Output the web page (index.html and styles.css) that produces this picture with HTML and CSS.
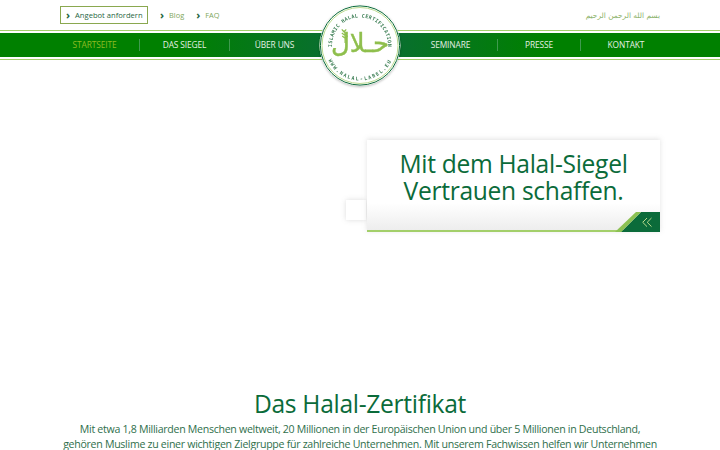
FILE: index.html
```html
<!DOCTYPE html>
<html lang="de">
<head>
  <title>Halal-Siegel</title>
  <meta name="viewport" content="width=device-width, initial-scale=1">
  <link rel="stylesheet" href="styles.css">
</head>
<body>
  <header class="header">
    <div class="topbar">
      <div class="toplinks">
        <a class="offer"><span class="chev">&#8250;</span>Angebot anfordern</a>
        <a class="toplink"><span class="chev">&#8250;</span>Blog</a>
        <a class="toplink"><span class="chev">&#8250;</span>FAQ</a>
      </div>
      <div class="basmala" dir="rtl" lang="ar">بسم الله الرحمن الرحيم</div>
    </div>

    <nav class="navband">
      <div class="navgrid">
        <a class="navitem active">STARTSEITE</a>
        <a class="navitem">DAS SIEGEL</a>
        <a class="navitem">ÜBER UNS</a>
        <span class="navgap"></span>
        <a class="navitem">SEMINARE</a>
        <a class="navitem">PRESSE</a>
        <a class="navitem last">KONTAKT</a>
      </div>
    </nav>

    <svg class="logo" width="84" height="84" viewBox="0 0 84 84">
      <defs>
        <path id="arcTop" d="M15.7 52 A28 28 0 1 1 68.3 52"/>
        <path id="arcBottom" d="M7 42.5 A35 35 0 0 0 77 42.5"/>
      </defs>
      <circle cx="42" cy="42.5" r="40.5" fill="#fff"/>
      <circle cx="42" cy="42.5" r="39.6" fill="none" stroke="#0b6b3a" stroke-width="1"/>
      <circle cx="42" cy="42.5" r="38" fill="none" stroke="#a9d072" stroke-width="0.8"/>
      <text class="logoring"><textPath href="#arcTop" startOffset="50%" text-anchor="middle">ISLAMIC HALAL CERTIFICATION</textPath></text>
      <text class="logoring wide"><textPath href="#arcBottom" startOffset="50%" text-anchor="middle">WWW.HALAL-LABEL.EU</textPath></text>
      <text class="logoword" x="42" y="49" lang="ar" text-anchor="middle">حـلال</text>
      <path d="M27 40 C27 36 27 32 26 27" fill="none" stroke="#8fbf4d" stroke-width="1"/>
      <path d="M26 29 l-2.2 -2.6 M26.4 32 l-2.6 -2 M26.8 35 l-2.6 -2 M26.2 29 l2 -2.6 M26.8 32 l2.4 -2.2 M27.2 35 l2.4 -2.2" fill="none" stroke="#8fbf4d" stroke-width="1.2"/>
    </svg>
  </header>

  <section class="hero">
    <button class="heroprev" aria-label="Zurück"></button>
    <div class="herocard">
      <h2 class="herotitle">Mit dem Halal-Siegel<br>Vertrauen schaffen.</h2>
      <div class="herofoot">
        <svg class="herocorner" width="48" height="20" viewBox="0 0 48 20">
          <polygon points="9,20 29,0 48,0 48,20" fill="#0b6b3a"/>
          <polygon points="3,20 24,0 29,0 9,20" fill="#8cc152"/>
          <path d="M35 6 L30.7 10.3 L35 14.6 M39.5 6 L35.2 10.3 L39.5 14.6" fill="none" stroke="#b9dc8c" stroke-width="1"/>
        </svg>
      </div>
    </div>
  </section>

  <section class="intro">
    <h1 class="introtitle">Das Halal-Zertifikat</h1>
    <p class="introtext">Mit etwa 1,8 Milliarden Menschen weltweit, 20 Millionen in der Europäischen Union und über 5 Millionen in Deutschland, gehören Muslime zu einer wichtigen Zielgruppe für zahlreiche Unternehmen. Mit unserem Fachwissen helfen wir Unternehmen</p>
  </section>
</body>
</html>
```

FILE: styles.css
```css
html {
  font-family: "Open Sans", "Noto Sans", sans-serif;
}
body {
  margin: 0;
  background-color: #fff;
  overflow: hidden;
}
.header {
  position: relative;
}
.topbar {
  display: flex;
  justify-content: space-between;
  align-items: center;
  height: 30px;
  padding: 0 60px;
}
.toplinks {
  display: flex;
  align-items: center;
}
.offer {
  display: flex;
  align-items: center;
  box-sizing: border-box;
  height: 18px;
  width: 88px;
  padding-left: 5px;
  border: 1px solid #8aa84f;
  font-size: 7.6px;
  white-space: nowrap;
  color: #27663f;
}
.toplink {
  display: flex;
  align-items: center;
  margin-left: 12px;
  font-size: 7.4px;
  color: #7fa65c;
}
.chev {
  margin-right: 5px;
  font-size: 11px;
  line-height: 10px;
  font-weight: bold;
  color: #27663f;
}
.basmala {
  font-family: "DejaVu Sans", sans-serif;
  font-size: 7.4px;
  color: #8cb26a;
}
.navband {
  box-sizing: border-box;
  height: 30px;
  padding: 2px 0;
  border-top: 1px solid #a3cf6a;
  border-bottom: 1px solid #a3cf6a;
  background-clip: content-box;
  background-image: linear-gradient(90deg, #008000 0%, #008000 25%, #0b6b3a 50%, #008000 75%, #008000 100%);
}
.navgrid {
  display: grid;
  grid-template-columns: 90px 90px 90px 84px 94px 83px 90px;
  height: 100%;
  margin-left: 50px;
  align-items: center;
}
.navitem {
  border-right: 1px solid #3f9a4f;
  font-size: 8.4px;
  letter-spacing: -0.12px;
  line-height: 12px;
  text-align: center;
  color: #e4efe2;
}
.navitem.active {
  color: #8fbb22;
}
.navitem.last {
  border-right: none;
}
.logo {
  position: absolute;
  left: 318px;
  top: 3px;
  filter: drop-shadow(0 1px 1px rgba(0,0,0,.25));
}
.logoring {
  font-family: "DejaVu Sans Mono", monospace;
  font-size: 5px;
  font-weight: bold;
  letter-spacing: 0.35px;
  fill: #3d7f55;
}
.logoring.wide {
  letter-spacing: 1.4px;
}
.logoword {
  font-family: "DejaVu Sans", sans-serif;
  font-size: 26px;
  fill: #8fbf4d;
  stroke: #8fbf4d;
  stroke-width: 0.4px;
}
.hero {
  display: flex;
  justify-content: flex-end;
  align-items: flex-end;
  box-sizing: border-box;
  height: 172px;
  padding-right: 60px;
}
.heroprev {
  width: 20px;
  height: 20px;
  margin: 0 1px 12px 0;
  padding: 0;
  border: none;
  background-color: #fff;
  box-shadow: 0 0 5px rgba(140,140,140,.3);
}
.herocard {
  display: flex;
  flex-direction: column;
  box-sizing: border-box;
  width: 293px;
  height: 92px;
  background-color: #fff;
  box-shadow: 0 -1px 5px rgba(140,140,140,.25);
}
.herotitle {
  margin: 0;
  height: 63px;
  padding-top: 10px;
  box-sizing: border-box;
  font-size: 24.6px;
  letter-spacing: -0.3px;
  line-height: 27px;
  font-weight: normal;
  text-align: center;
  color: #0b6b3a;
}
.herofoot {
  display: flex;
  justify-content: flex-end;
  align-items: flex-end;
  height: 29px;
  background-image: linear-gradient(#a3cf6a, #a3cf6a), linear-gradient(#fff, #ececec);
  background-size: 100% 2px, 100% 100%;
  background-position: bottom, top;
  background-repeat: no-repeat;
}
.herocorner {
  display: block;
  flex: none;
}
.intro {
  padding: 156px 60px 0;
  text-align: center;
}
.introtitle {
  margin: 0;
  font-size: 24.6px;
  letter-spacing: -0.3px;
  line-height: 31px;
  font-weight: normal;
  color: #0b6b3a;
}
.introtext {
  margin: 3px 0 0;
  font-size: 10.6px;
  letter-spacing: -0.29px;
  line-height: 15px;
  color: #2f6f4c;
}
```
